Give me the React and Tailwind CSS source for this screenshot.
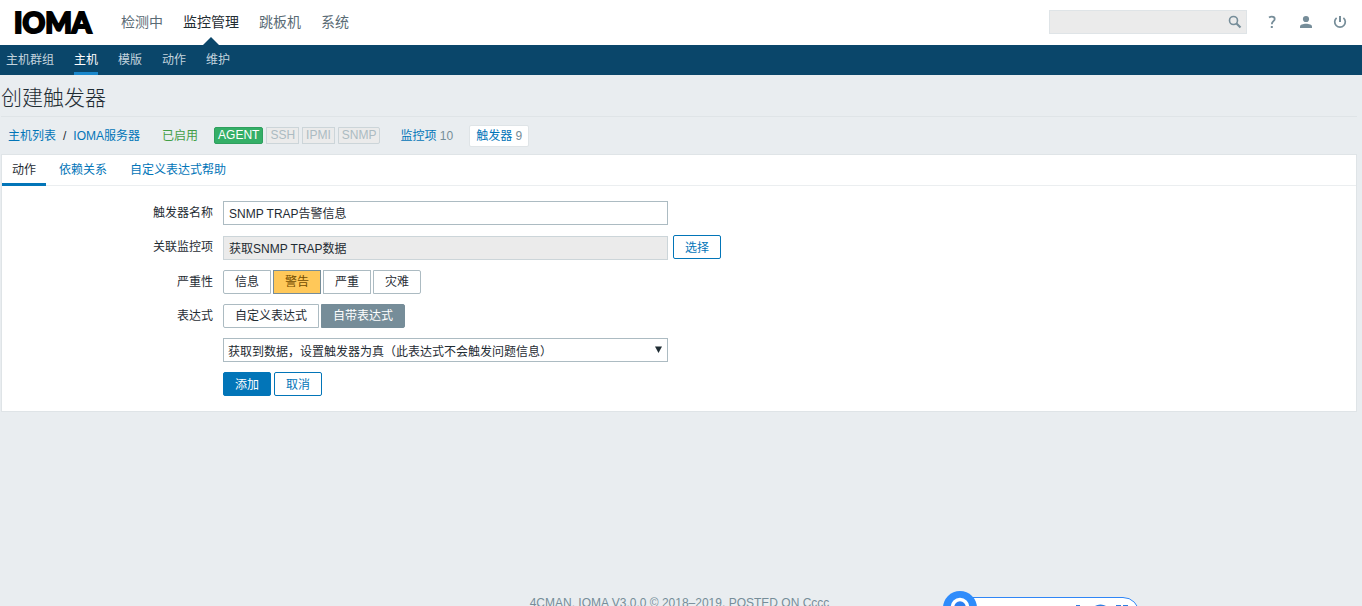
import React, { useState } from 'react';

const mainMenu = ['检测中', '监控管理', '跳板机', '系统'];
const subMenu = ['主机群组', '主机', '模版', '动作', '维护'];
const tabs = ['动作', '依赖关系', '自定义表达式帮助'];
const interfaces = ['SSH', 'IPMI', 'SNMP'];
const severities = ['信息', '警告', '严重', '灾难'];
const expressionTypes = ['自定义表达式', '自带表达式'];

const RadioGroup = ({ name, label, options, value, onChange, activeClass }) => (
    <div role="radiogroup" aria-label={label} className="flex gap-0.5">
        {options.map((option) => (
            <label
                key={option}
                className={`relative h-6 px-[11px] leading-[22px] border cursor-pointer first:rounded-l-xs last:rounded-r-xs ${
                    value === option ? activeClass : 'bg-white border-[#acbbc2]'
                }`}
            >
                <input
                    type="radio"
                    name={name}
                    className="sr-only"
                    checked={value === option}
                    onChange={() => onChange(option)}
                />
                {option}
            </label>
        ))}
    </div>
);

const FormRow = ({ label, htmlFor, children }) => (
    <div className="flex items-start">
        <div className="w-[211px] shrink-0 mr-2.5 text-right leading-6">
            {htmlFor ? <label htmlFor={htmlFor}>{label}</label> : label}
        </div>
        {children}
    </div>
);

const Header = () => (
    <header>
        <div className="h-[45px] bg-white flex items-center pl-3 pr-[11px]">
            <a href="#" className="w-[109px] pl-0.5 pb-0.5 font-['Lato'] font-black text-[28px] leading-none text-black [-webkit-text-stroke:2px_black]">
                IOMA
            </a>
            <nav className="flex gap-5 h-full text-sm leading-[45px]">
                {mainMenu.map((item) => (
                    <a
                        key={item}
                        href="#"
                        className={item === '监控管理' ? 'relative text-[#1f2c33]' : 'text-[#5a6b75]'}
                    >
                        {item}
                        {item === '监控管理' && (
                            <svg className="absolute bottom-0 left-1/2 -translate-x-1/2" width="16" height="8" viewBox="0 0 16 8">
                                <path d="M8 0l8 8H0z" fill="#0a466a" />
                            </svg>
                        )}
                    </a>
                ))}
            </nav>
            <div className="ml-auto pb-0.5 flex items-center gap-3 text-[#768d99]">
                <form className="relative" onSubmit={(e) => e.preventDefault()}>
                    <input
                        type="text"
                        aria-label="搜索"
                        className="block w-[198px] h-6 pl-1.5 pr-7 bg-[#ebebeb] border border-[#dfe4e7] outline-none"
                    />
                    <button type="submit" aria-label="搜索" className="absolute right-1 top-1 size-4">
                        <svg width="16" height="16" viewBox="0 0 16 16" fill="none" stroke="currentColor">
                            <circle cx="6.5" cy="6.5" r="4" strokeWidth="1.6" />
                            <path d="M9.5 9.5l4 4" strokeWidth="2.2" />
                        </svg>
                    </button>
                </form>
                <a href="#" aria-label="帮助" className="w-[22px] flex justify-center ml-0.5">
                    <svg width="16" height="16" viewBox="0 0 16 16" fill="none" stroke="currentColor" strokeWidth="1.8">
                        <path d="M5 3.400C5.900 2.800 6.800 2.600 7.800 2.600c1.900 0 2.900.9 2.900 2.400 0 2.100-2.900 2.400-2.900 5.200" />
                        <path d="M6.800 13h2" strokeWidth="2" />
                    </svg>
                </a>
                <a href="#" aria-label="用户" className="w-[22px] flex justify-center">
                    <svg width="16" height="16" viewBox="0 0 16 16" fill="currentColor">
                        <circle cx="8" cy="5" r="3.100" />
                        <path d="M2 14v-1.500C2 10.700 5 9.700 8 9.700s6 1 6 2.800V14z" />
                    </svg>
                </a>
                <a href="#" aria-label="退出" className="w-[22px] flex justify-center">
                    <svg width="16" height="16" viewBox="0 0 16 16" fill="none" stroke="currentColor" strokeWidth="1.700">
                        <path d="M4.600 3.800a5.300 5.300 0 1 0 6.800 0" />
                        <path d="M8 2v6" strokeWidth="2" />
                    </svg>
                </a>
            </div>
        </div>
        <nav className="h-[30px] bg-[#0a466a] flex gap-5 px-1.5 leading-[30px]">
            {subMenu.map((item) => (
                <a
                    key={item}
                    href="#"
                    className={item === '主机' ? 'text-white border-b-3 border-[#1a87cb]' : 'text-[#c3d4de]'}
                >
                    {item}
                </a>
            ))}
        </nav>
    </header>
);

const HostBar = () => (
    <div className="flex items-center h-[37px] pl-[7px] text-[#0275b8]">
        <a href="#">主机列表</a>
        <span className="mx-[7px] text-[#1f2c33]">/</span>
        <a href="#">IOMA服务器</a>
        <span className="ml-[22px] text-[#429e47]">已启用</span>
        <div className="flex gap-[3px] ml-4 leading-[15px]">
            <span className="px-[3px] border border-[#2f9f5e] bg-[#34af67] text-white rounded-xs">AGENT</span>
            {interfaces.map((name) => (
                <span key={name} className="px-[3px] border border-[#ccd5d9] bg-[#ebebeb] text-[#acbbc2] last:rounded-r-xs">
                    {name}
                </span>
            ))}
        </div>
        <span className="ml-5">
            <a href="#">监控项</a> <span className="text-[#768d99]">10</span>
        </span>
        <span className="ml-4 px-1.5 leading-5 bg-white border border-[#dfe4e7] rounded-xs">
            <a href="#">触发器</a> <span className="text-[#768d99]">9</span>
        </span>
    </div>
);

const TriggerForm = () => {
    const [name, setName] = useState('SNMP TRAP告警信息');
    const [severity, setSeverity] = useState('警告');
    const [expressionType, setExpressionType] = useState('自带表达式');

    return (
        <form className="flex flex-col gap-2.5 pt-[15px] pb-[15px]" onSubmit={(e) => e.preventDefault()}>
            <FormRow label="触发器名称" htmlFor="name">
                <input
                    id="name"
                    type="text"
                    value={name}
                    onChange={(e) => setName(e.target.value)}
                    className="w-[445px] h-6 px-[5px] pb-0.5 bg-white border border-[#acbbc2] outline-none"
                />
            </FormRow>
            <FormRow label="关联监控项" htmlFor="item">
                <div className="flex items-start gap-[5px]">
                    <input
                        id="item"
                        type="text"
                        readOnly
                        value="获取SNMP TRAP数据"
                        className="w-[445px] h-6 mt-px px-[5px] pb-0.5 bg-[#ebebeb] border border-[#ccd5d9] outline-none"
                    />
                    <button type="button" className="h-6 px-[11px] pt-0.5 border border-[#0275b8] rounded-xs text-[#0275b8]">
                        选择
                    </button>
                </div>
            </FormRow>
            <FormRow label="严重性">
                <RadioGroup
                    name="severity"
                    label="严重性"
                    options={severities}
                    value={severity}
                    onChange={setSeverity}
                    activeClass="bg-[#ffc859] border-[#768d99] text-[#734d00]"
                />
            </FormRow>
            <FormRow label="表达式">
                <RadioGroup
                    name="expression_type"
                    label="表达式"
                    options={expressionTypes}
                    value={expressionType}
                    onChange={setExpressionType}
                    activeClass="bg-[#768d99] border-[#768d99] text-white"
                />
            </FormRow>
            <FormRow>
                <div className="relative">
                    <select
                        aria-label="自带表达式"
                        className="block w-[445px] h-6 pl-1 pr-6 pt-1 appearance-none bg-white border border-[#acbbc2] outline-none"
                    >
                        <option>获取到数据，设置触发器为真（此表达式不会触发问题信息）</option>
                    </select>
                    <svg className="absolute right-1.5 top-2 pointer-events-none" width="7" height="7" viewBox="0 0 7 7">
                        <path d="M0 0.500h7L3.500 7z" fill="#1f2c33" />
                    </svg>
                </div>
            </FormRow>
            <FormRow>
                <div className="flex gap-[3px]">
                    <button type="submit" className="h-6 px-[11px] pt-0.5 border border-[#0275b8] rounded-xs bg-[#0275b8] text-white">
                        添加
                    </button>
                    <button type="button" className="h-6 px-[11px] pt-0.5 border border-[#0275b8] rounded-xs text-[#0275b8]">
                        取消
                    </button>
                </div>
            </FormRow>
        </form>
    );
};

const FloatingBar = () => (
    <svg className="fixed bottom-0 left-[943px]" width="198" height="15" viewBox="0 0 198 15">
        <path d="M20 6.500h160a16 16 0 0 1 16 16H20z" fill="#fff" stroke="#2f86f6" />
        <circle cx="17" cy="17" r="17" fill="#2f8cfb" />
        <circle cx="17" cy="16" r="7.500" fill="#2f7ff0" stroke="#fff" strokeWidth="3.500" />
        <path d="M133 14h4v1h-4zM152 15a7 4 0 0 1 11 0zM173 14h5v1h-5zM180 14h5v1h-5z" fill="#2f7fe0" />
    </svg>
);

const App = () => (
    <div className="h-screen overflow-hidden flex flex-col bg-[#e9edf0] text-xs text-[#1f2c33] font-['Liberation_Sans','Noto_Sans_CJK_SC',sans-serif]">
        <Header />
        <main className="flex-1 pl-px pr-[5px]">
            <h1 className="h-[42px] text-[21px] font-light leading-[45px] border-b border-[#dfe4e7]">创建触发器</h1>
            <HostBar />
            <section className="bg-white border border-[#dfe4e7]">
                <nav className="flex gap-[3px] h-[31px] border-b border-[#ebeef0]">
                    {tabs.map((tab, index) => (
                        <a
                            key={tab}
                            href="#"
                            className={`h-[31px] px-2.5 leading-[30px] ${
                                index === 0 ? 'border-b-3 border-[#0275b8]' : 'text-[#0275b8]'
                            }`}
                        >
                            {tab}
                        </a>
                    ))}
                </nav>
                <TriggerForm />
            </section>
        </main>
        <footer className="h-3 shrink-0 pr-[3px] text-center leading-[18px] text-[#768d99]">
            4CMAN. IOMA V3.0.0 © 2018–2019, POSTED ON Cccc
        </footer>
        <FloatingBar />
    </div>
);

export default App;
